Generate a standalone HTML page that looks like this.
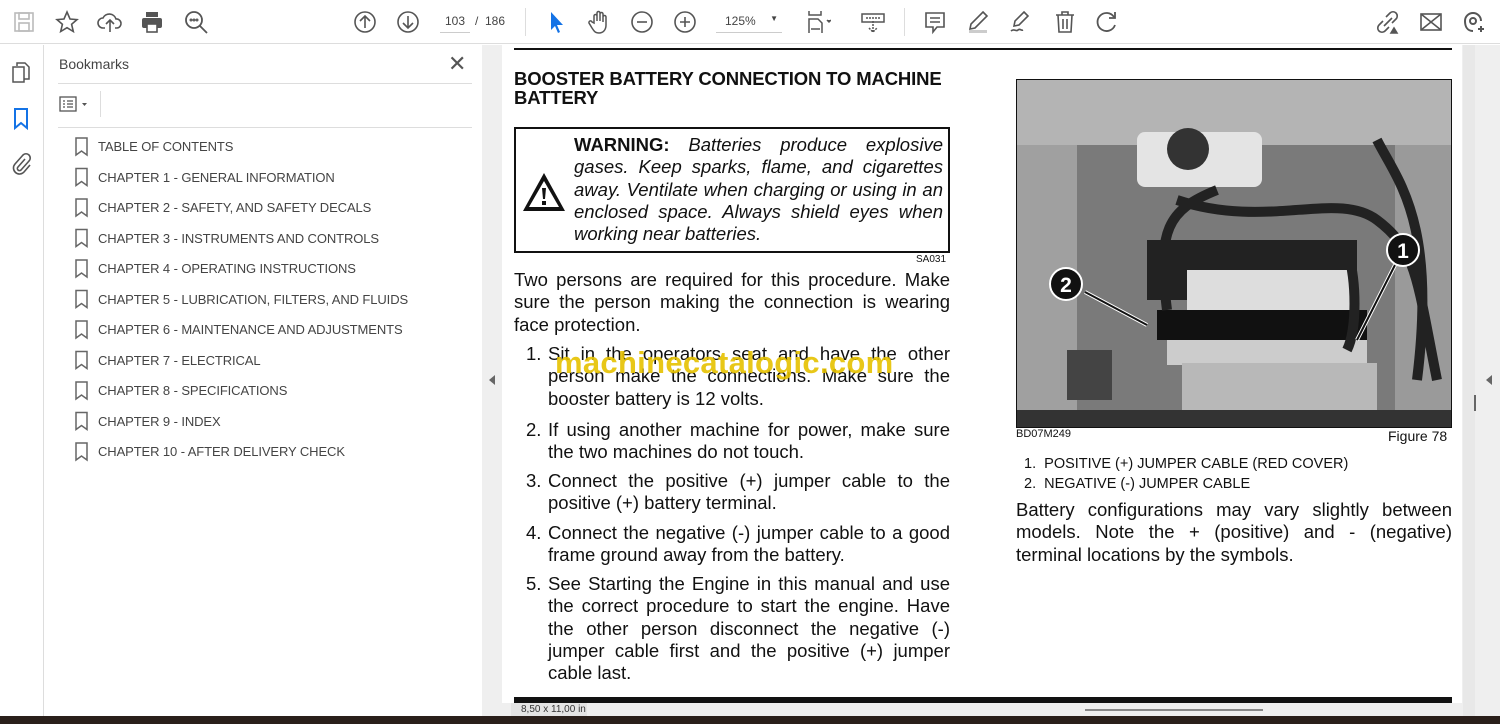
<!DOCTYPE html>
<html><head><meta charset="utf-8"><style>
*{margin:0;padding:0;box-sizing:border-box}
body{width:1500px;height:724px;overflow:hidden;background:#fff;font-family:"Liberation Sans",sans-serif;position:relative}
.abs{position:absolute}
.tb{left:0;top:0;width:1500px;height:44px;background:#fff;border-bottom:1px solid #ddd}
.ic{position:absolute;top:9px;width:26px;height:26px}
.rail{left:0;top:45px;width:44px;height:671px;background:#fff;border-right:1px solid #ddd}
.bm{left:44px;top:45px;width:438px;height:671px;background:#fff}
.gray{left:482px;top:45px;width:20px;height:671px;background:#efefef}
.rgray{left:1462px;top:45px;width:38px;height:671px;background:#efefef}
.page{left:502px;top:45px;width:960px;height:658px;background:#fff}
.bl{position:absolute;left:98px;font-size:13px;letter-spacing:-0.1px;color:#444;white-space:nowrap}
.txt{font-size:18.5px;color:#111;line-height:22.3px;text-align:justify}
</style></head><body>
<div class="abs tb">
<svg class="ic" style="left:11px" viewBox="0 0 26 26" fill="none" stroke="#bbb" stroke-width="1.6"><rect x="4" y="4" width="18" height="18"/><rect x="8" y="4" width="10" height="6"/><rect x="8" y="14" width="10" height="8"/></svg>
<svg class="ic" style="left:54px" viewBox="0 0 26 26" fill="none" stroke="#555" stroke-width="1.6"><path d="M13 3l3 7 7 .6-5.4 4.7 1.7 7.2L13 18.7 6.7 22.5l1.7-7.2L3 10.6l7-.6z"/></svg>
<svg class="ic" style="left:97px" viewBox="0 0 26 26" fill="none" stroke="#555" stroke-width="1.6"><path d="M8 19H6a5 5 0 0 1 0-10 7 7 0 0 1 13 1 4 4 0 0 1 1 9h-2M13 23V12M9 15l4-4 4 4"/></svg>
<svg class="ic" style="left:139px" viewBox="0 0 26 26" fill="#555"><rect x="7" y="3" width="12" height="5"/><rect x="3" y="9" width="20" height="10" rx="2"/><rect x="8" y="15" width="10" height="8" fill="#fff" stroke="#555" stroke-width="1.6"/></svg>
<svg class="ic" style="left:183px" viewBox="0 0 26 26" fill="none" stroke="#555" stroke-width="1.8"><circle cx="11" cy="11" r="8"/><path d="M17 17l7 7"/><circle cx="8" cy="11" r=".6"/><circle cx="11" cy="11" r=".6"/><circle cx="14" cy="11" r=".6"/></svg>
<svg class="ic" style="left:352px" viewBox="0 0 26 26" fill="none" stroke="#555" stroke-width="1.6"><circle cx="13" cy="13" r="10"/><path d="M13 19V7M8 12l5-5 5 5"/></svg>
<svg class="ic" style="left:395px" viewBox="0 0 26 26" fill="none" stroke="#555" stroke-width="1.6"><circle cx="13" cy="13" r="10"/><path d="M13 7v12M8 14l5 5 5-5"/></svg>
<div class="abs" style="left:440px;top:14px;width:30px;font-size:12px;color:#444;text-align:center;border-bottom:1px solid #ccc;padding-bottom:4px">103</div>
<div class="abs" style="left:475px;top:14px;font-size:12px;color:#444">/ &nbsp;186</div>
<div class="abs" style="left:525px;top:8px;width:1px;height:28px;background:#ddd"></div>
<svg class="ic" style="left:543px" viewBox="0 0 26 26"><path d="M8 3v18l4-4 3 7 2-1-3-7h6z" fill="#1473e6"/></svg>
<svg class="ic" style="left:586px" viewBox="0 0 26 26" fill="none" stroke="#555" stroke-width="1.5"><path d="M8 14V7a1.5 1.5 0 0 1 3 0v5V4a1.5 1.5 0 0 1 3 0v8V5a1.5 1.5 0 0 1 3 0v8-5a1.5 1.5 0 0 1 3 0v8c0 5-3 8-7 8s-5-2-7-5l-3-5a1.5 1.5 0 0 1 3-1z"/></svg>
<svg class="ic" style="left:629px" viewBox="0 0 26 26" fill="none" stroke="#555" stroke-width="1.6"><circle cx="13" cy="13" r="10"/><path d="M8 13h10"/></svg>
<svg class="ic" style="left:672px" viewBox="0 0 26 26" fill="none" stroke="#555" stroke-width="1.6"><circle cx="13" cy="13" r="10"/><path d="M8 13h10M13 8v10"/></svg>
<div class="abs" style="left:716px;top:14px;width:66px;font-size:12px;color:#444;border-bottom:1px solid #ccc;padding-bottom:4px;padding-left:9px">125% <span style="float:right;font-size:8px;padding-right:4px">▼</span></div>
<svg class="ic" style="left:805px" viewBox="0 0 26 26" fill="none" stroke="#555" stroke-width="1.5"><path d="M4 2v4h12V2M4 24V10h9l4 4v10M6 20h9"/><path d="M22 11l2 2 2-2" fill="#555"/></svg>
<svg class="ic" style="left:860px" viewBox="0 0 26 26" fill="none" stroke="#555" stroke-width="1.5"><rect x="2" y="5" width="22" height="8"/><path d="M13 12v11M9 19l4 4 4-4M6 9h14" stroke-dasharray="2 1"/></svg>
<div class="abs" style="left:904px;top:8px;width:1px;height:28px;background:#ddd"></div>
<svg class="ic" style="left:922px" viewBox="0 0 26 26" fill="none" stroke="#555" stroke-width="1.6"><path d="M4 4h18v14h-7l-4 5v-5H4z M8 9h10M8 13h10"/></svg>
<svg class="ic" style="left:965px" viewBox="0 0 26 26" fill="none" stroke="#555" stroke-width="1.6"><path d="M18 3l4 4L10 19l-5 1 1-5z"/><rect x="4" y="21" width="18" height="3" fill="#ccc" stroke="none"/></svg>
<svg class="ic" style="left:1008px" viewBox="0 0 26 26" fill="none" stroke="#555" stroke-width="1.6"><path d="M16 3l4 4-9 9-5 1 1-5zM3 22c3-3 5 1 7-1s3 1 5 0"/></svg>
<svg class="ic" style="left:1052px" viewBox="0 0 26 26" fill="none" stroke="#555" stroke-width="1.6"><path d="M4 6h18M10 6V3h6v3M6 6l1 17h12l1-17M11 10v10M15 10v10"/></svg>
<svg class="ic" style="left:1094px" viewBox="0 0 26 26" fill="none" stroke="#555" stroke-width="1.8"><path d="M20 8a9 9 0 1 0 1 8"/><path d="M21 3v6h-6"/></svg>
<svg class="ic" style="left:1375px" viewBox="0 0 26 26" fill="none" stroke="#555" stroke-width="1.6"><path d="M11 8l4-4a4 4 0 0 1 6 6l-4 4M14 18l-4 4a4 4 0 0 1-6-6l4-4M9 17l8-8"/><path d="M16 24l3-5 3 5z" fill="#555"/></svg>
<svg class="ic" style="left:1418px" viewBox="0 0 26 26" fill="none" stroke="#555" stroke-width="1.6"><rect x="3" y="5" width="20" height="16"/><path d="M3 5l20 16M23 5L3 21"/></svg>
<svg class="ic" style="left:1461px" viewBox="0 0 26 26" fill="none" stroke="#555" stroke-width="2"><path d="M12 22C6 22 4 17 4 12a8 8 0 0 1 16 0"/><circle cx="12" cy="12" r="3"/><path d="M20 17v6M17 20h6"/></svg>
</div>
<div class="abs rail">
<svg class="abs" style="left:10px;top:16px" width="22" height="24" viewBox="0 0 22 24" fill="none" stroke="#555" stroke-width="1.5"><path d="M7 5V2h8l4 4v12h-5"/><rect x="3" y="6" width="11" height="15"/></svg>
<svg class="abs" style="left:12px;top:62px" width="18" height="24" viewBox="0 0 18 24" fill="none" stroke="#1473e6" stroke-width="2"><path d="M3 2h12v19l-6-5-6 5z"/></svg>
<svg class="abs" style="left:10px;top:106px" width="22" height="24" viewBox="0 0 22 24" fill="none" stroke="#555" stroke-width="1.6"><path d="M15 8l-7 8a2 2 0 0 0 3 3l8-9a4 4 0 0 0-6-6l-8 9a6 6 0 0 0 9 8l6-7"/></svg>
</div>
<div class="abs bm">
<div class="abs" style="left:15px;top:11px;font-size:14px;color:#444">Bookmarks</div>
<div class="abs" style="left:404px;top:6px;font-size:22px;color:#555">✕</div>
<div class="abs" style="left:14px;top:38px;width:414px;height:1px;background:#ddd"></div>
<svg class="abs" style="left:15px;top:51px" width="32" height="16" viewBox="0 0 32 16" fill="none" stroke="#555" stroke-width="1.3"><rect x="1" y="1" width="16" height="14"/><path d="M4 5h2M8 5h6M4 8h2M8 8h6M4 11h2M8 11h6"/><path d="M23 7h5l-2.5 3z" fill="#555" stroke="none"/></svg>
<div class="abs" style="left:56px;top:46px;width:1px;height:26px;background:#ddd"></div>
<div class="abs" style="left:14px;top:82px;width:414px;height:1px;background:#ddd"></div>
</div>
<div class="bl" style="top:139px">TABLE OF CONTENTS</div>
<div class="bl" style="top:170px">CHAPTER 1 - GENERAL INFORMATION</div>
<div class="bl" style="top:200px">CHAPTER 2 - SAFETY, AND SAFETY DECALS</div>
<div class="bl" style="top:231px">CHAPTER 3 - INSTRUMENTS AND CONTROLS</div>
<div class="bl" style="top:261px">CHAPTER 4 - OPERATING INSTRUCTIONS</div>
<div class="bl" style="top:292px">CHAPTER 5 - LUBRICATION, FILTERS, AND FLUIDS</div>
<div class="bl" style="top:322px">CHAPTER 6 - MAINTENANCE AND ADJUSTMENTS</div>
<div class="bl" style="top:353px">CHAPTER 7 - ELECTRICAL</div>
<div class="bl" style="top:383px">CHAPTER 8 - SPECIFICATIONS</div>
<div class="bl" style="top:414px">CHAPTER 9 - INDEX</div>
<div class="bl" style="top:444px">CHAPTER 10 - AFTER DELIVERY CHECK</div>
<svg class="abs" style="left:74px;top:137px" width="16" height="330" viewBox="0 0 16 330" fill="none" stroke="#666" stroke-width="1.5">
<g id="b"><path d="M2 1h11v17l-5.5-4L2 18z"/></g>
<use href="#b" y="30.5"/><use href="#b" y="61"/><use href="#b" y="91.5"/><use href="#b" y="122"/><use href="#b" y="152.5"/><use href="#b" y="183"/><use href="#b" y="213.5"/><use href="#b" y="244"/><use href="#b" y="274.5"/><use href="#b" y="305"/>
</svg>
<div class="abs gray"><div class="abs" style="left:7px;top:330px;width:0;height:0;border-top:5px solid transparent;border-bottom:5px solid transparent;border-right:6px solid #666"></div></div>
<div class="abs rgray"><div class="abs" style="left:1px;top:0;width:12px;height:671px;background:#e8e8e8"></div><div class="abs" style="left:24px;top:330px;width:0;height:0;border-top:5px solid transparent;border-bottom:5px solid transparent;border-right:6px solid #666"></div><div class="abs" style="left:12px;top:350px;width:2px;height:16px;background:#666"></div></div>
<div class="abs page">
<div class="abs" style="left:12px;top:3px;width:938px;height:2px;background:#111"></div>
<div class="abs" style="left:12px;top:24px;font-size:18.5px;font-weight:bold;line-height:19px;color:#111;letter-spacing:-0.15px">BOOSTER BATTERY CONNECTION TO MACHINE<br>BATTERY</div>
<div class="abs" style="left:12px;top:82px;width:436px;height:126px;border:2px solid #111"></div>
<svg class="abs" style="left:19px;top:126px" width="46" height="42" viewBox="0 0 46 42"><path d="M23 2L44 40H2z" fill="#111"/><path d="M23 10L38 36H8z" fill="#fff"/><path d="M21 17h4l-1 11h-2z M21 30h4v4h-4z" fill="#111"/></svg>
<div class="abs txt" style="left:72px;top:89px;width:369px;font-style:italic"><b style="font-style:normal">WARNING:</b> Batteries produce explosive gases. Keep sparks, flame, and cigarettes away. Ventilate when charging or using in an enclosed space. Always shield eyes when working near batteries.</div>
<div class="abs" style="left:414px;top:209px;font-size:10px;color:#111">SA031</div>
<div class="abs txt" style="left:12px;top:224px;width:436px">Two persons are required for this procedure. Make sure the person making the connection is wearing face protection.</div>
<div class="abs txt" style="left:24px;top:298px">1.</div><div class="abs txt" style="left:46px;top:298px;width:402px">Sit in the operators seat and have the other person make the connections. Make sure the booster battery is 12 volts.</div>
<div class="abs txt" style="left:24px;top:374px">2.</div><div class="abs txt" style="left:46px;top:374px;width:402px">If using another machine for power, make sure the two machines do not touch.</div>
<div class="abs txt" style="left:24px;top:425px">3.</div><div class="abs txt" style="left:46px;top:425px;width:402px">Connect the positive (+) jumper cable to the positive (+) battery terminal.</div>
<div class="abs txt" style="left:24px;top:477px">4.</div><div class="abs txt" style="left:46px;top:477px;width:402px">Connect the negative (-) jumper cable to a good frame ground away from the battery.</div>
<div class="abs txt" style="left:24px;top:528px">5.</div><div class="abs txt" style="left:46px;top:528px;width:402px">See Starting the Engine in this manual and use the correct procedure to start the engine. Have the other person disconnect the negative (-) jumper cable first and the positive (+) jumper cable last.</div>
<div class="abs" style="left:53px;top:300px;font-size:31px;font-weight:bold;color:#e6c200;opacity:.9;letter-spacing:.3px">machinecatalogic.com</div>
<div class="abs" style="left:514px;top:34px;width:436px;height:349px;border:1px solid #111;background:#7a7a7a;overflow:hidden">
<div class="abs" style="left:0;top:0;width:436px;height:65px;background:#b4b4b4"></div>
<div class="abs" style="left:0;top:65px;width:60px;height:284px;background:#a0a0a0"></div>
<div class="abs" style="left:378px;top:65px;width:58px;height:284px;background:#9a9a9a"></div>
<div class="abs" style="left:120px;top:52px;width:125px;height:55px;background:#e4e4e4;border-radius:8px"></div>
<div class="abs" style="left:150px;top:48px;width:42px;height:42px;background:#333;border-radius:50%"></div>
<div class="abs" style="left:130px;top:160px;width:210px;height:60px;background:#222"></div>
<div class="abs" style="left:170px;top:190px;width:170px;height:45px;background:#ddd"></div>
<div class="abs" style="left:140px;top:230px;width:210px;height:30px;background:#111"></div>
<div class="abs" style="left:150px;top:260px;width:200px;height:25px;background:#ccc"></div>
<div class="abs" style="left:165px;top:283px;width:195px;height:50px;background:#b8b8b8"></div>
<div class="abs" style="left:0;top:330px;width:436px;height:19px;background:#333"></div>
<div class="abs" style="left:50px;top:270px;width:45px;height:50px;background:#444"></div>
<svg class="abs" style="left:0;top:0" width="436" height="349"><g fill="none" stroke="#222" stroke-width="10"><path d="M200 110C150 130 140 150 150 230"/><path d="M160 120C250 150 320 110 360 140S400 200 420 300"/><path d="M360 60C380 100 420 140 400 300"/><path d="M330 170C340 200 340 250 330 270"/></g><g stroke="#fff" stroke-width="4"><path d="M68 212L130 245M378 185L340 260"/></g><g stroke="#111" stroke-width="2"><path d="M68 212L130 245M378 185L340 260"/></g><circle cx="49" cy="204" r="16" fill="#111" stroke="#fff" stroke-width="2"/><text x="49" y="212" font-size="21" font-weight="bold" fill="#fff" text-anchor="middle" font-family="Liberation Sans">2</text><circle cx="386" cy="170" r="16" fill="#111" stroke="#fff" stroke-width="2"/><text x="386" y="178" font-size="21" font-weight="bold" fill="#fff" text-anchor="middle" font-family="Liberation Sans">1</text></svg>
</div>
<div class="abs" style="left:514px;top:383px;font-size:11px;color:#111">BD07M249</div>
<div class="abs" style="left:886px;top:383px;font-size:14px;color:#111">Figure 78</div>
<div class="abs" style="left:522px;top:409px;font-size:14.5px;color:#111;line-height:20px">1. &nbsp;POSITIVE (+) JUMPER CABLE (RED COVER)<br>2. &nbsp;NEGATIVE (-) JUMPER CABLE</div>
<div class="abs txt" style="left:514px;top:454px;width:436px">Battery configurations may vary slightly between models. Note the + (positive) and - (negative) terminal locations by the symbols.</div>
<div class="abs" style="left:12px;top:652px;width:938px;height:6px;background:#111"></div>
</div>
<div class="abs" style="left:502px;top:703px;width:960px;height:13px;background:#efefef"></div>
<div class="abs" style="left:511px;top:703px;width:76px;height:13px;background:#e4e4e4;font-size:10px;color:#333;padding:1px 0 0 10px;white-space:nowrap">8,50 x 11,00 in</div>
<div class="abs" style="left:1085px;top:709px;width:178px;height:2px;background:#888"></div>
<div class="abs" style="left:0;top:716px;width:1500px;height:8px;background:#2a1f1a"></div>
</body></html>
